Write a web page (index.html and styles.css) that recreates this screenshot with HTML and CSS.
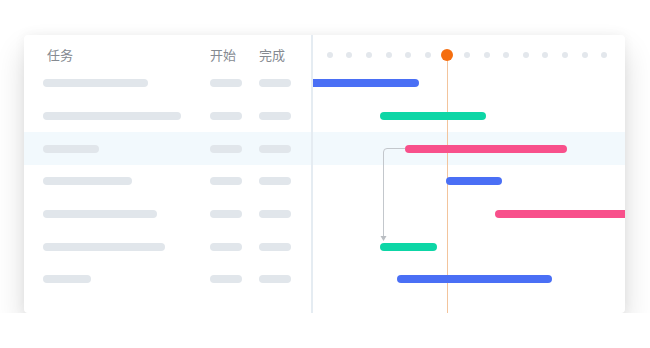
FILE: index.html
```html
<!DOCTYPE html>
<html lang="zh">
<head>
  <meta charset="UTF-8" />
  <title>甘特图</title>
  <link rel="stylesheet" href="styles.css">
</head>
<body>
  <div class="card">
    <div class="tasks">
      <div class="row head">
        <span class="title">任务</span>
        <span>开始</span>
        <span>完成</span>
      </div>
      <div class="row"><i class="sk" style="width:105px"></i><i class="sk"></i><i class="sk"></i></div>
      <div class="row"><i class="sk" style="width:138px"></i><i class="sk"></i><i class="sk"></i></div>
      <div class="row active"><i class="sk" style="width:56px"></i><i class="sk"></i><i class="sk"></i></div>
      <div class="row"><i class="sk" style="width:89px"></i><i class="sk"></i><i class="sk"></i></div>
      <div class="row"><i class="sk" style="width:114px"></i><i class="sk"></i><i class="sk"></i></div>
      <div class="row"><i class="sk" style="width:122px"></i><i class="sk"></i><i class="sk"></i></div>
      <div class="row"><i class="sk" style="width:48px"></i><i class="sk"></i><i class="sk"></i></div>
    </div>

    <div class="timeline">
      <div class="now-line"></div>
      <div class="dots">
        <span class="dot"></span><span class="dot"></span><span class="dot"></span>
        <span class="dot"></span><span class="dot"></span><span class="dot"></span>
        <span class="dot now"></span>
        <span class="dot"></span><span class="dot"></span><span class="dot"></span>
        <span class="dot"></span><span class="dot"></span><span class="dot"></span>
        <span class="dot"></span><span class="dot"></span>
      </div>
      <div class="lane"><i class="bar blue cut-left" style="margin-left:0;width:106px"></i></div>
      <div class="lane"><i class="bar green" style="margin-left:67px;width:106px"></i></div>
      <div class="lane active"><i class="bar pink" style="margin-left:92px;width:162px"></i></div>
      <div class="lane"><i class="bar blue" style="margin-left:133px;width:56px"></i></div>
      <div class="lane"><i class="bar pink cut-right" style="margin-left:182px;width:130px"></i></div>
      <div class="lane"><i class="bar green" style="margin-left:67px;width:57px"></i></div>
      <div class="lane"><i class="bar blue" style="margin-left:84px;width:155px"></i></div>

      <!-- dependency arrow -->
      <svg class="link" width="312" height="278" viewBox="0 0 312 278">
        <path d="M92 113.5 H74 Q70.5 113.5 70.5 117 V202" fill="none" stroke="#c3c7cc" stroke-width="1"/>
        <polygon points="67.5,201 73.5,201 70.5,206" fill="#b9bdc2"/>
      </svg>
    </div>
  </div>
</body>
</html>
```

FILE: styles.css
```css
body {
  margin: 0;
  padding: 35px 25px 0 24px;
  background: #fff;
  font-family: "Noto Sans CJK SC", "Noto Sans", sans-serif;
}

.card {
  display: flex;
  width: 601px;
  height: 278px;
  background: #fff;
  border-radius: 4px;
  box-shadow: 0 16px 30px rgba(0, 0, 0, 0.14), 0 0 12px rgba(0, 0, 0, 0.05);
  overflow: hidden;
}

.tasks {
  width: 287px;
  border-right: 2px solid #e5ecf2;
}

.row {
  display: grid;
  grid-template-columns: 150px 32px 32px;
  column-gap: 17px;
  align-items: center;
  height: 32.66px;
  padding: 0 20px 0 19px;
}

.row.head {
  height: 32px;
  align-items: start;
  padding-top: 11px;
  box-sizing: border-box;
  font-size: 13px;
  line-height: 18px;
  color: #858a91;
  white-space: nowrap;
}

.row.head .title {
  padding-left: 4px;
}

.active {
  background: #f2f9fd;
}

.sk {
  display: block;
  height: 8px;
  border-radius: 4px;
  background: #e1e6eb;
}

.timeline {
  position: relative;
  flex: 1;
  overflow: hidden;
}

.dots {
  position: relative;
  z-index: 2;
  display: flex;
  align-items: flex-start;
  height: 32px;
  padding: 14px 0 0 7px;
  box-sizing: border-box;
}

.dot {
  display: flex;
  justify-content: center;
  align-items: center;
  width: 19.6px;
  height: 12px;
}

.dot::before {
  content: "";
  width: 6px;
  height: 6px;
  border-radius: 50%;
  background: #e3e7ec;
}

.dot.now::before {
  width: 12px;
  height: 12px;
  background: #f56e0f;
}

.now-line {
  position: absolute;
  left: 134px;
  top: 20px;
  bottom: 0;
  width: 1px;
  background: #f3c49c;
  z-index: 1;
}

.lane {
  display: flex;
  align-items: center;
  height: 32.66px;
}

.bar {
  position: relative;
  z-index: 2;
  display: block;
  height: 8px;
  border-radius: 4px;
}

.bar.blue { background: #4a6ff5; }
.bar.green { background: #0dd6a6; }
.bar.pink { background: #f8508b; }

.bar.cut-left { border-radius: 0 4px 4px 0; }
.bar.cut-right { border-radius: 4px 0 0 4px; }

.link {
  position: absolute;
  left: 0;
  top: 0;
  z-index: 1;
}
```
